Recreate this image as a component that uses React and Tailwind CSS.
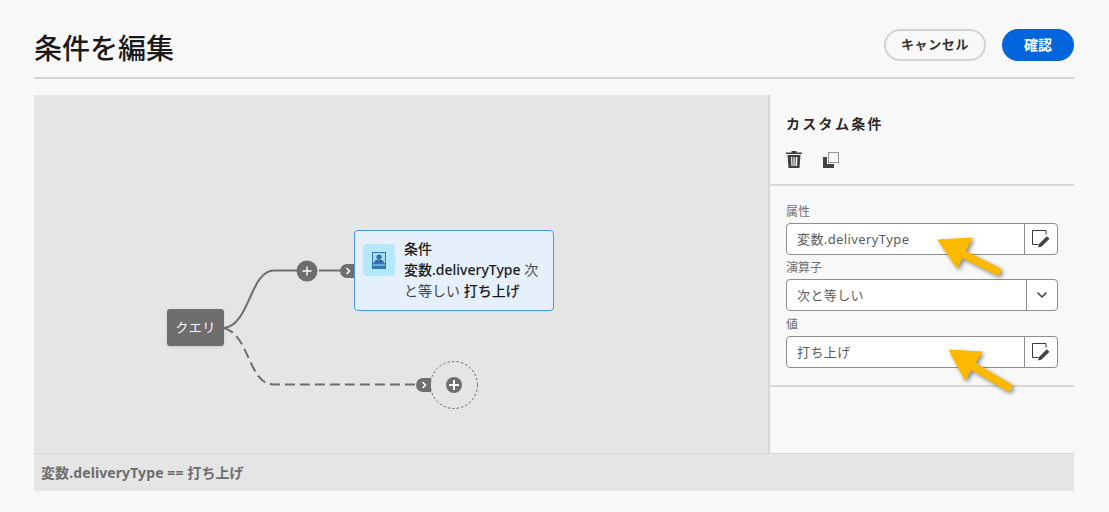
import { ChevronDown } from "lucide-react";

const font = { fontFamily: '"Noto Sans", "Noto Sans CJK JP", sans-serif' };

function EditIcon() {
  return (
    <svg width="19" height="18" viewBox="0 0 19 18">
      <path d="M6.500 14.500H0.500V0.500H14V4.500" fill="none" stroke="#3a3a3a" strokeWidth="1" />
      <path d="M6 17.500l1-3.500L14.800 6.200l2.700 2.600-7.800 7.700z" fill="#444" />
    </svg>
  );
}

function Field({ label, value, select, className = "" }) {
  return (
    <div className={`flex flex-col ${className}`}>
      <div className="h-[21px] text-[12px] leading-[20px] text-[#707070]">{label}</div>
      <div className="flex h-[32px] w-[272px] rounded-[4px] border border-[#8e8e8e] bg-white">
        <div className="flex-1 pl-[10px] text-[13px] leading-[30px] tracking-[0.4px] text-[#5c5c5c]">{value}</div>
        <div className={`flex items-center justify-center border-l border-[#8e8e8e] ${select ? "w-[31px]" : "w-[33px]"}`}>
          {select ? <ChevronDown size={16} strokeWidth={2.5} className="text-[#444]" /> : <EditIcon />}
        </div>
      </div>
    </div>
  );
}

function Tab({ className }) {
  return (
    <div className={`absolute flex h-[14px] w-[15px] items-center justify-center rounded-l-[7px] bg-[#6e6e6e] ${className}`}>
      <svg width="6" height="8" viewBox="0 0 6 8">
        <path d="M1.500 1l3 3-3 3" fill="none" stroke="#fff" strokeWidth="1.500" />
      </svg>
    </div>
  );
}

export default function App() {
  return (
    <div className="relative h-[512px] w-full overflow-hidden bg-[#f8f8f8]" style={font}>
      <div className="mx-[34px] w-[1040px]">
        {/* Header */}
        <header className="flex h-[79px] items-center justify-between border-b-2 border-[#d5d5d5] pt-[12px]">
          <h1 className="mt-[7px] text-[28px] font-medium leading-none text-[#1a1a1a]">条件を編集</h1>
          <div className="flex items-center gap-[16px]">
            <button className="h-[32px] w-[102px] rounded-full border-2 border-[#d3d3d3] text-[13px] font-bold tracking-[0.6px] text-[#333]">
              キャンセル
            </button>
            <button className="h-[32px] w-[72px] rounded-full bg-[#0265dc] text-[14px] font-bold text-white">確認</button>
          </div>
        </header>

        <div className="mt-[16px] flex h-[358px]">
          {/* Canvas */}
          <div className="relative w-[734px] bg-[#e5e5e5]">
            <svg className="absolute left-0 top-0" width="734" height="358" viewBox="34 95 734 358">
              <path d="M224 328C250 325 250 270.500 274 270.500H297" fill="none" stroke="#6e6e6e" strokeWidth="2" />
              <path d="M319 270.500H341" fill="none" stroke="#6e6e6e" strokeWidth="2" />
              <path d="M224 328C250 335 248 384.500 274 384.500H417" fill="none" stroke="#6e6e6e" strokeWidth="2" strokeDasharray="10 5" />
              <circle cx="454" cy="385" r="23.500" fill="none" stroke="#6e6e6e" strokeWidth="1" strokeDasharray="2.500 2" />
              <circle cx="307" cy="271" r="10.500" fill="#6e6e6e" />
              <path d="M302.500 271h9M307 266.500v9" stroke="#fff" strokeWidth="1.400" />
              <circle cx="454" cy="385" r="8" fill="#6e6e6e" />
              <path d="M449 385h10M454 380v10" stroke="#fff" strokeWidth="2" />
            </svg>
            <Tab className="left-[306px] top-[169px]" />
            <Tab className="left-[382px] top-[283px]" />
            <div className="absolute left-[133px] top-[214px] flex h-[37px] w-[57px] items-center justify-center rounded-[3px] bg-[#6e6e6e] text-[13px] tracking-[0.5px] text-white shadow-sm">
              クエリ
            </div>
            <div className="absolute left-[320px] top-[135px] flex h-[81px] w-[200px] gap-[9px] rounded-[4px] border-[1.5px] border-[#4a96f0] bg-[#e5f0fc] pl-[8px] pt-[7px]">
              <div className="mt-[6px] flex h-[32px] w-[32px] shrink-0 items-center justify-center rounded-[4px] bg-[#b5e8fb]">
                <svg width="14" height="17" viewBox="0 0 14 17">
                  <path d="M0 0h14v17H0z" fill="#2f7ab5" />
                  <path d="M1 1h12v10H1z" fill="#a9dcf3" />
                  <circle cx="7" cy="5" r="2.600" fill="#2f6fa5" />
                  <path d="M2 11c.3-3 2.800-3.500 5-3.500s4.700.5 5 3.500z" fill="#2f6fa5" />
                  <path d="M1 13h12" stroke="#a9dcf3" strokeWidth="1" />
                </svg>
              </div>
              <div className="w-[145px] text-[14px] leading-[21px] text-[#444]">
                <div className="font-medium text-[#1a1a1a]">条件</div>
                <div>
                  <span className="font-medium text-[#1a1a1a]">変数.deliveryType</span> 次と等しい{" "}
                  <span className="font-medium text-[#1a1a1a]">打ち上げ</span>
                </div>
              </div>
            </div>
          </div>

          {/* Right panel */}
          <aside className="flex w-[306px] flex-col border-l-2 border-[#d8d8d8]">
            <div className="h-[91px] border-b-2 border-[#d8d8d8] pl-[16px]">
              <h2 className="mt-[19px] text-[14px] font-bold leading-[20px] tracking-[2.3px] text-[#2c2c2c]">カスタム条件</h2>
              <div className="mt-[17px] flex items-center gap-[21px]">
                <svg width="16" height="17" viewBox="0 0 16 17">
                  <path d="M5.500 1.500V0h5v1.500H16V3H0V1.500z" fill="#3f3f3f" />
                  <path d="M1.500 4h13l-1 13h-11zM5 6l.4 9h1.200L6.200 6zm2.400 0v9h1.200V6zm2.400 0l-.4 9H11l.4-9z" fill="#3f3f3f" fillRule="evenodd" />
                </svg>
                <svg width="16" height="16" viewBox="0 0 16 16">
                  <path d="M0 5h4v7h7v4H0z" fill="#444" />
                  <rect x="5.500" y="0.500" width="10" height="10" fill="none" stroke="#333" strokeWidth="1" strokeDasharray="1 1" />
                </svg>
              </div>
            </div>
            <div className="flex h-[201px] flex-col gap-[3px] border-b-2 border-[#d8d8d8] pl-[16px] pt-[16px]">
              <Field label="属性" value="変数.deliveryType" />
              <Field label="演算子" value="次と等しい" select />
              <Field label="値" value="打ち上げ" className="mt-[1px]" />
            </div>
          </aside>
        </div>

        {/* Expression bar */}
        <div className="h-[38px] border-t border-[#d8d8d8] bg-[#e5e5e5] pl-[7px] text-[14px] font-bold leading-[37px] tracking-[0.1px] text-[#6e6e6e]">
          変数.deliveryType == 打ち上げ
        </div>
      </div>

      {/* Callout arrows */}
      <svg className="pointer-events-none absolute left-0 top-0 drop-shadow-[2px_2px_2px_rgba(0,0,0,0.45)]" width="1109" height="512">
        <path d="M938 240L972 238L957 268Z" fill="#fdb900" stroke="#fdb900" strokeLinejoin="round" />
        <path d="M955 250L997 271" fill="none" stroke="#fdb900" strokeWidth="8" strokeLinecap="round" />
        <path d="M949 350L982 352L965 380Z" fill="#fdb900" stroke="#fdb900" strokeLinejoin="round" />
        <path d="M966 362L1008 387" fill="none" stroke="#fdb900" strokeWidth="8" strokeLinecap="round" />
      </svg>
    </div>
  );
}
